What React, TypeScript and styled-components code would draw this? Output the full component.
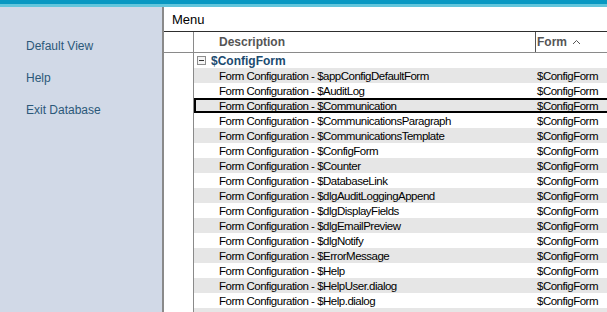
import styled, { createGlobalStyle } from "styled-components";

const GlobalStyle = createGlobalStyle`
  html, body {
    margin: 0;
    padding: 0;
    background: #ffffff;
    overflow: hidden;
  }
  body {
    font-family: "Liberation Sans", Arial, sans-serif;
    font-size: 12px;
  }
`;

const Page = styled.div`
  width: 607px;
  height: 312px;
  display: flex;
  flex-direction: column;
  overflow: hidden;
`;

const TopBar = styled.div`
  height: 7px;
  flex-shrink: 0;
  background: linear-gradient(to bottom, #0898c2 0, #0898c2 4px, #62c6dc 4px, #62c6dc 7px);
`;

const Body = styled.div`
  flex: 1;
  display: flex;
  min-height: 0;
`;

const Sidebar = styled.nav`
  width: 164px;
  flex-shrink: 0;
  background: #d1d9e7;
  border-right: 2px solid #8a8a8a;
  padding: 23px 0 0 26px;
  box-sizing: border-box;
  display: flex;
  flex-direction: column;
`;

const SideLink = styled.a`
  height: 32px;
  line-height: 32px;
  color: #2b5879;
  font-size: 12px;
  text-decoration: none;
`;

const Main = styled.section`
  flex: 1;
  display: flex;
  flex-direction: column;
  min-width: 0;
  background: #ffffff;
`;

const MenuBar = styled.div`
  height: 24px;
  flex-shrink: 0;
  border-bottom: 1px solid #2e2e2e;
  padding-left: 8px;
  display: flex;
  align-items: center;
  font-size: 13px;
  color: #000;
`;

const Row = styled.div<{ $tall?: boolean }>`
  display: flex;
  flex-shrink: 0;
  height: ${(p) => (p.$tall ? "20px" : "15px")};
  white-space: nowrap;
`;

const HeaderRow = styled(Row)`
  border-bottom: 1px solid #8a8a8a;
`;

const Gutter = styled.div`
  width: 29px;
  flex-shrink: 0;
  border-right: 1px solid #8a8a8a;
`;

const Content = styled.div<{ $shade?: boolean; $selected?: boolean }>`
  flex: 1;
  display: flex;
  align-items: center;
  min-width: 0;
  box-sizing: border-box;
  background: ${(p) => (p.$shade ? "#e6e6e6" : "#ffffff")};
  border: ${(p) => (p.$selected ? "2px solid #000" : "none")};
  margin-right: ${(p) => (p.$selected ? "-2px" : "0")};
`;

const DescCell = styled.div<{ $selected?: boolean }>`
  width: ${(p) => (p.$selected ? "339px" : "341px")};
  flex-shrink: 0;
  padding-left: ${(p) => (p.$selected ? "23px" : "25px")};
  box-sizing: border-box;
  overflow: hidden;
  color: #000;
  font-size: 11.5px;
  letter-spacing: -0.5px;
`;

const FormCell = styled.div`
  flex: 1;
  padding-left: 2px;
  color: #000;
  font-size: 11.5px;
  letter-spacing: -0.5px;
`;

const HeadDesc = styled.div`
  width: 341px;
  flex-shrink: 0;
  padding-left: 25px;
  box-sizing: border-box;
  font-weight: bold;
  color: #555555;
`;

const HeadForm = styled.div`
  flex: 1;
  align-self: stretch;
  display: flex;
  align-items: center;
  gap: 5px;
  border-left: 1px solid #555555;
  padding-left: 1px;
  font-weight: bold;
  color: #555555;
`;

const GroupContent = styled(Content)`
  padding-left: 3px;
  gap: 5px;
  font-weight: bold;
  font-size: 12px;
  color: #1b4b70;
`;

const Rows = styled.div`
  flex: 1;
  display: flex;
  flex-direction: column;
  overflow: hidden;
`;

const Filler = styled(Row)`
  flex: 1;
`;

const CollapseIcon = () => (
  <svg width="9" height="9" viewBox="0 0 9 9">
    <rect x="0.5" y="0.5" width="8" height="8" fill="#f4f4f4" stroke="#8c8c8c" />
    <line x1="2" y1="4.5" x2="7" y2="4.5" stroke="#333" />
  </svg>
);

const SortUp = () => (
  <svg width="9" height="6" viewBox="0 0 9 6">
    <polyline points="1,5 4.5,1.5 8,5" fill="none" stroke="#555" strokeWidth="1" />
  </svg>
);

const names = [
  "$appConfigDefaultForm",
  "$AuditLog",
  "$Communication",
  "$CommunicationsParagraph",
  "$CommunicationsTemplate",
  "$ConfigForm",
  "$Counter",
  "$DatabaseLink",
  "$dlgAuditLoggingAppend",
  "$dlgDisplayFields",
  "$dlgEmailPreview",
  "$dlgNotify",
  "$ErrorMessage",
  "$Help",
  "$HelpUser.dialog",
  "$Help.dialog",
  "$Keywords",
];

export default function App() {
  return (
    <>
      <GlobalStyle />
      <Page>
        <TopBar />
        <Body>
          <Sidebar>
            <SideLink href="#">Default View</SideLink>
            <SideLink href="#">Help</SideLink>
            <SideLink href="#">Exit Database</SideLink>
          </Sidebar>
          <Main>
            <MenuBar>Menu</MenuBar>
            <HeaderRow $tall>
              <Gutter />
              <Content>
                <HeadDesc>Description</HeadDesc>
                <HeadForm>
                  Form <SortUp />
                </HeadForm>
              </Content>
            </HeaderRow>
            <Rows>
              <Row>
                <Gutter />
                <GroupContent>
                  <CollapseIcon />
                  $ConfigForm
                </GroupContent>
              </Row>
              {names.map((n, i) => {
                const selected = n === "$Communication";
                return (
                  <Row key={n}>
                    <Gutter />
                    <Content $shade={i % 2 === 0} $selected={selected}>
                      <DescCell $selected={selected}>Form Configuration - {n}</DescCell>
                      <FormCell>$ConfigForm</FormCell>
                    </Content>
                  </Row>
                );
              })}
              <Filler>
                <Gutter />
              </Filler>
            </Rows>
          </Main>
        </Body>
      </Page>
    </>
  );
}
